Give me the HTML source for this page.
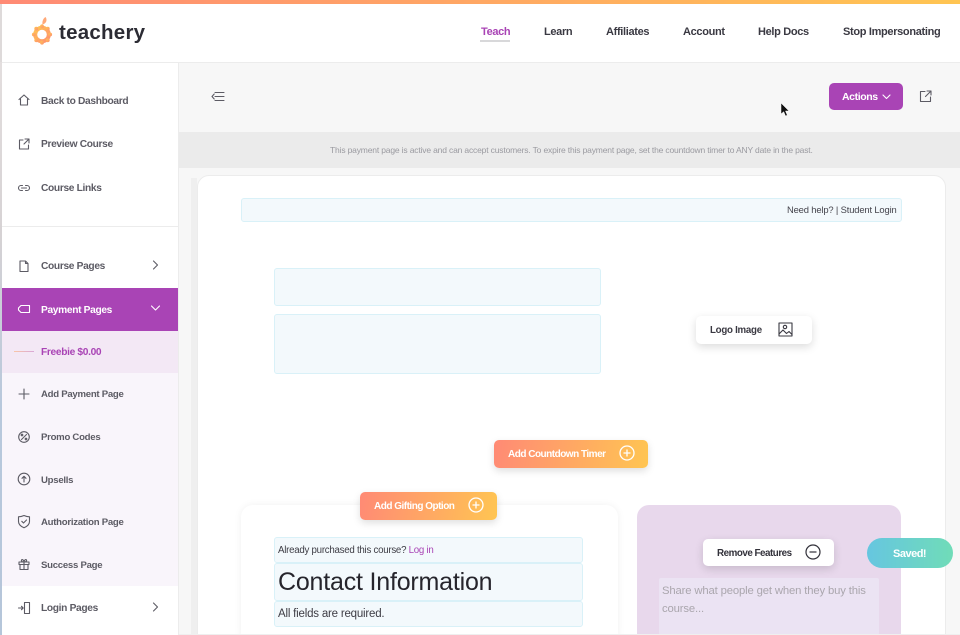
<!DOCTYPE html>
<html><head><meta charset="utf-8"><style>
html,body{margin:0;padding:0;width:960px;height:635px;overflow:hidden;background:#f7f7f7}
body{position:relative;font-family:"Liberation Sans",sans-serif;color:#54535c}
div,svg{position:absolute}
.t{position:absolute;white-space:nowrap;font-size:10.2px;font-weight:bold;line-height:14px;color:#5c5b64;letter-spacing:-.33px}
.s{font-size:9.6px;letter-spacing:-.27px}
.n{position:absolute;white-space:nowrap;font-size:11px;font-weight:bold;line-height:14px;top:25px;color:#3a3942;letter-spacing:-.33px}
.i{fill:none;stroke:#5c5b64;stroke-width:1.1;stroke-linecap:round;stroke-linejoin:round}
.box{background:#f3f9fc;border:1px solid #d9f1f8;box-sizing:border-box;border-radius:3px}
.or{background:linear-gradient(100deg,#ff8a75,#ffc552);border-radius:5px;box-shadow:0 3px 8px rgba(0,0,0,.13);color:#fff}
.wh{background:#fff;border-radius:5px;box-shadow:0 3px 9px rgba(0,0,0,.14)}
</style></head><body>
<!-- header -->
<div style="left:0;top:0;width:960px;height:4px;background:linear-gradient(90deg,#ff8a75,#ffc552)"></div>
<div style="left:0;top:4px;width:960px;height:58px;background:#fff;border-bottom:1px solid #ececec;box-sizing:content-box"></div>
<div style="left:0;top:4px;width:1.500px;height:59px;background:#dedada"></div>
<svg style="left:30px;top:15px" width="26" height="32" viewBox="0 0 26 32">
<defs><linearGradient id="g" x1="0" y1="0" x2="1" y2="1"><stop offset="0" stop-color="#ffc552"/><stop offset="1" stop-color="#ff8f70"/></linearGradient></defs>
<path d="M12.500 9.500C12 6.500 13 3.500 15.500 2C17.500 4.500 16.500 8.500 12.500 9.500Z" fill="#ffa878"/>
<circle cx="12" cy="19.500" r="6.800" fill="none" stroke="url(#g)" stroke-width="4"/>
<g fill="url(#g)"><circle cx="12" cy="11.300" r="1.900"/><circle cx="12" cy="27.700" r="1.900"/><circle cx="3.800" cy="19.500" r="1.900"/><circle cx="20.200" cy="19.500" r="1.900"/><circle cx="6.200" cy="13.700" r="1.900"/><circle cx="17.800" cy="13.700" r="1.900"/><circle cx="6.200" cy="25.300" r="1.900"/><circle cx="17.800" cy="25.300" r="1.900"/></g>
</svg>
<div class="t" style="left:59px;top:21px;font-size:20.500px;line-height:24px;color:#2c2c34;letter-spacing:.25px">teachery</div>
<div class="n" style="left:481px;color:#a944b5">Teach</div>
<div style="left:480px;top:40px;width:30px;height:2px;background:#d8d8da"></div>
<div class="n" style="left:544px">Learn</div>
<div class="n" style="left:606px">Affiliates</div>
<div class="n" style="left:683px">Account</div>
<div class="n" style="left:758px">Help Docs</div>
<div class="n" style="left:843px">Stop Impersonating</div>
<!-- sidebar -->
<div style="left:0;top:62px;width:1.500px;height:573px;background:linear-gradient(180deg,#e3dede,#d6d2d4 30%,#b8c8dc 60%,#b5c6da)"></div>
<div style="left:1.500px;top:63px;width:176.500px;height:572px;background:#fff;border-right:1px solid #ececec"></div>
<div style="left:2px;top:226px;width:176px;height:1px;background:#ececec"></div>
<div style="left:1.500px;top:288px;width:176.500px;height:43px;background:#a944b5"></div>
<div style="left:1.500px;top:331px;width:176.500px;height:42px;background:#f3e8f5"></div>
<div style="left:1.500px;top:373px;width:176.500px;height:213px;background:#f9f5fb"></div>
<div style="left:14px;top:351px;width:20px;height:1px;background:linear-gradient(90deg,#f9c6a6,#d9a8d8)"></div>
<div class="t" style="left:41px;top:94.500px">Back to Dashboard</div>
<div class="t" style="left:41px;top:138px">Preview Course</div>
<div class="t" style="left:41px;top:182px">Course Links</div>
<div class="t" style="left:41px;top:260px">Course Pages</div>
<div class="t" style="left:41px;top:304px;color:#fff">Payment Pages</div>
<div class="t" style="left:41px;top:346px;color:#a944b5">Freebie $0.00</div>
<div class="t s" style="left:41px;top:388px">Add Payment Page</div>
<div class="t s" style="left:41px;top:431px">Promo Codes</div>
<div class="t s" style="left:41px;top:474px">Upsells</div>
<div class="t s" style="left:41px;top:516px">Authorization Page</div>
<div class="t s" style="left:41px;top:559px">Success Page</div>
<div class="t" style="left:41px;top:602px">Login Pages</div>
<svg class="i" style="left:17px;top:93px" width="14" height="14" viewBox="0 0 14 14"><path d="M2 6.500L7 2L12 6.500M3.500 6V12H10.500V6"/></svg>
<svg class="i" style="left:17px;top:137px" width="14" height="14" viewBox="0 0 14 14"><path d="M6 3H2.500V12H11.500V8M8 2H12V6M12 2L7 7"/></svg>
<svg class="i" style="left:17px;top:181px" width="14" height="14" viewBox="0 0 14 14"><path d="M5.500 4.500H4A2.500 2.500 0 0 0 4 9.500H5.500M8.500 4.500H10A2.500 2.500 0 0 1 10 9.500H8.500M4.500 7H9.500"/></svg>
<svg class="i" style="left:17px;top:259px" width="14" height="14" viewBox="0 0 14 14"><path d="M3 2H8.500L11 4.500V12.500H3ZM8.500 2V4.500H11"/></svg>
<svg class="i" style="left:150px;top:259px" width="11" height="12" viewBox="0 0 11 12"><path d="M3.500 2L7.500 6L3.500 10"/></svg>
<svg class="i" style="left:17px;top:302px;stroke:#fff" width="14" height="14" viewBox="0 0 14 14"><path d="M4 3.500H12.500V10.500H4L1.500 8V6Z"/></svg>
<svg class="i" style="left:150px;top:302px;stroke:#fff" width="11" height="12" viewBox="0 0 11 12"><path d="M1.500 4L5.500 8L9.500 4"/></svg>
<svg class="i" style="left:17px;top:387px" width="14" height="14" viewBox="0 0 14 14"><path d="M7 2V12M2 7H12"/></svg>
<svg class="i" style="left:17px;top:430px" width="14" height="14" viewBox="0 0 14 14"><circle cx="7" cy="7" r="5.300"/><path d="M9.500 4.500L4.500 9.500"/><circle cx="5" cy="5" r=".8"/><circle cx="9" cy="9" r=".8"/></svg>
<svg class="i" style="left:17px;top:472px" width="14" height="14" viewBox="0 0 14 14"><circle cx="7" cy="7" r="5.800"/><path d="M7 10V4.500M5 6.300L7 4.300L9 6.300"/></svg>
<svg class="i" style="left:17px;top:514px" width="14" height="15" viewBox="0 0 14 15"><path d="M7 1.500C9 2.500 10.500 2.800 12.500 2.800V7.500C12.500 10.500 10 12.500 7 13.800C4 12.500 1.500 10.500 1.500 7.500V2.800C3.500 2.800 5 2.500 7 1.500ZM4.800 7.300L6.500 9L9.500 6"/></svg>
<svg class="i" style="left:17px;top:557px" width="14" height="14" viewBox="0 0 14 14"><path d="M2 5H12V7.500H2ZM3 7.500V12.500H11V7.500M7 5V12.500M7 5C5 5 4 4 4.500 3S7 3 7 5C7 3 9 2 9.500 3S9 5 7 5"/></svg>
<svg class="i" style="left:17px;top:601px" width="14" height="14" viewBox="0 0 14 14"><path d="M7.500 1.500H12.500V12.500H7.500ZM1.500 7H6M4.500 5.300L6.200 7L4.500 8.700"/></svg>
<svg class="i" style="left:150px;top:601px" width="11" height="12" viewBox="0 0 11 12"><path d="M3.500 2L7.500 6L3.500 10"/></svg>
<!-- top bar -->
<svg class="i" style="left:211px;top:90px" width="14" height="13" viewBox="0 0 14 13"><path d="M4 2.500H13M4 6.500H13M4 10.500H13M3.200 4L1 6.500L3.200 9"/></svg>
<div style="left:829px;top:83px;width:74px;height:27px;background:#a944b5;border-radius:5px"></div>
<div class="t" style="left:842px;top:90px;color:#fff;font-size:10.500px;letter-spacing:-.4px">Actions</div>
<svg class="i" style="left:881px;top:91px;stroke:#fff" width="11" height="11" viewBox="0 0 11 11"><path d="M2 4L5.500 7.500L9 4"/></svg>
<svg class="i" style="left:919px;top:90px" width="13" height="13" viewBox="0 0 13 13"><path d="M6 1.500H1.500V11.500H11.500V7M8 1H12V5M12 1L6.500 6.500"/></svg>
<svg style="left:780px;top:102px" width="10" height="16" viewBox="0 0 10 16"><path d="M1 1V12L3.700 9.700L5.500 14L7.300 13.200L5.500 9H9Z" fill="#111" stroke="#fff" stroke-width=".5"/></svg>
<!-- banner -->
<div style="left:179px;top:132px;width:781px;height:36px;background:#ebebeb"></div>
<div class="t" style="left:330px;top:143px;font-size:8.500px;font-weight:normal;color:#9a9aa0;letter-spacing:-.165px">This payment page is active and can accept customers. To expire this payment page, set the countdown timer to ANY date in the past.</div>
<!-- card -->
<div style="left:191px;top:178px;width:6px;height:457px;background:#efefef"></div>
<div style="left:197px;top:175px;width:749px;height:470px;background:#fff;border-radius:12px;border:1px solid #ececec;box-sizing:border-box"></div>
<div class="box" style="left:241px;top:198px;width:661px;height:24px"></div>
<div class="t" style="left:787px;top:203px;font-size:9.400px;font-weight:normal;color:#45444c;letter-spacing:-.15px">Need help? | Student Login</div>
<div class="box" style="left:274px;top:268px;width:327px;height:38px"></div>
<div class="box" style="left:274px;top:314px;width:327px;height:60px"></div>
<div class="wh" style="left:696px;top:316px;width:116px;height:28px"></div>
<div class="t" style="left:710px;top:323.500px;color:#3a3942;font-size:9.700px;letter-spacing:-.25px">Logo Image</div>
<svg class="i" style="left:778px;top:322px;stroke:#3a3942" width="15" height="15" viewBox="0 0 15 15"><rect x="1" y="1" width="13" height="13"/><circle cx="7" cy="5" r="1.700"/><path d="M1 12L5 8L8.500 11.500L11 9.500L14 12.500"/></svg>
<div class="or" style="left:494px;top:440px;width:154px;height:28px"></div>
<div class="t" style="left:508px;top:448px;color:#fff;font-size:10px;letter-spacing:-.5px">Add Countdown Timer</div>
<svg style="left:619px;top:445px;fill:none;stroke:#fff;stroke-width:1.300" width="16" height="16" viewBox="0 0 16 16"><circle cx="8" cy="8" r="7"/><path d="M8 4.500V11.500M4.500 8H11.500"/></svg>
<!-- lower panels -->
<div style="left:241px;top:505px;width:377px;height:140px;background:#fff;border-radius:12px;box-shadow:0 0 8px rgba(0,0,0,.06)"></div>
<div style="left:637px;top:505px;width:264px;height:140px;background:#e8d8ec;border-radius:12px"></div>
<div class="or" style="left:360px;top:492px;width:137px;height:28px"></div>
<div class="t" style="left:374px;top:500px;color:#fff;font-size:10px;letter-spacing:-.5px">Add Gifting Option</div>
<svg style="left:468px;top:497px;fill:none;stroke:#fff;stroke-width:1.300" width="16" height="16" viewBox="0 0 16 16"><circle cx="8" cy="8" r="7"/><path d="M8 4.500V11.500M4.500 8H11.500"/></svg>
<div class="box" style="left:274px;top:537px;width:309px;height:26px"></div>
<div class="box" style="left:274px;top:563px;width:309px;height:38px"></div>
<div class="box" style="left:274px;top:601px;width:309px;height:26px"></div>
<div class="t" style="left:278px;top:544px;font-size:9.700px;font-weight:normal;color:#3d3c44;letter-spacing:-.25px">Already purchased this course? <span style="color:#a944b5">Log in</span></div>
<div class="t" style="left:278px;top:567px;font-size:25px;line-height:30px;font-weight:normal;color:#26252c;letter-spacing:-.2px">Contact Information</div>
<div class="t" style="left:278px;top:607px;font-size:11.500px;font-weight:normal;color:#3d3c44;letter-spacing:-.2px">All fields are required.</div>
<div class="wh" style="left:703px;top:539px;width:131px;height:27px"></div>
<div class="t" style="left:717px;top:546.500px;color:#32313a;font-size:9.800px;letter-spacing:-.47px">Remove Features</div>
<svg style="left:805px;top:544px;fill:none;stroke:#32313a;stroke-width:1.200" width="16" height="16" viewBox="0 0 16 16"><circle cx="8" cy="8" r="7"/><path d="M4.500 8H11.500"/></svg>
<div style="left:659px;top:578px;width:220px;height:57px;background:#ebe3f3;border-radius:2px"></div>
<div class="t" style="left:662px;top:582px;font-size:11.300px;font-weight:normal;line-height:18px;color:#aaa6ad;letter-spacing:-.15px">Share what people get when they buy this<br>course...</div>
<div style="left:867px;top:538px;width:86px;height:30px;border-radius:15px;background:linear-gradient(90deg,#66c6e0,#70dcb8)"></div>
<div class="t" style="left:893px;top:547px;color:#fff;font-size:11px;letter-spacing:-.5px">Saved!</div>
<!-- bottom edge -->
<div style="left:179px;top:634px;width:781px;height:1px;background:#efefef"></div>
</body></html>
